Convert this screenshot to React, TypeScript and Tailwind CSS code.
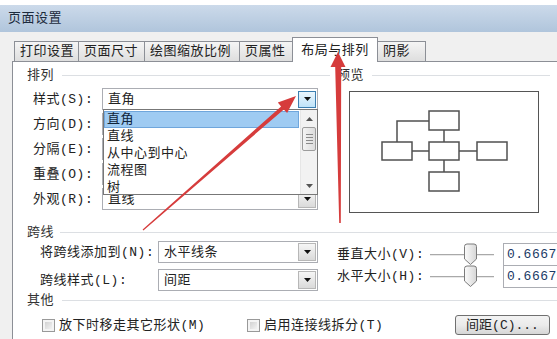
import { JSX } from "react";

// Win7-style "页面设置" dialog, 布局与排列 tab, with two red callout arrows

function DownTri({ color = "#111" }: { color?: string }) {
  return (
    <svg width="7" height="4" viewBox="0 0 7 4">
      <path d="M0 0H7L3.5 4Z" fill={color} />
    </svg>
  );
}

function UpTri({ color = "#555" }: { color?: string }) {
  return (
    <svg width="7" height="4" viewBox="0 0 7 4">
      <path d="M0 4H7L3.5 0Z" fill={color} />
    </svg>
  );
}

function Tab({ label, w, active }: { label: string; w: string; active?: boolean }) {
  if (active) {
    return (
      <div
        className={`relative z-10 -mb-px -ml-px h-[25px] ${w} shrink-0 border border-b-0 border-[#8c8f96] bg-white flex items-center justify-center`}
      >
        {label}
      </div>
    );
  }
  return (
    <div
      className={`-ml-px first:ml-0 h-[20px] ${w} shrink-0 border border-b-0 border-[#8c8f96] bg-gradient-to-b from-[#f5f5f5] to-[#dedede] flex items-center pl-[5px]`}
    >
      {label}
    </div>
  );
}

function SectionHeader({ label, lineClass }: { label: string; lineClass: string }) {
  return (
    <div className="h-[16px] flex items-center text-[#333]">
      <span className="shrink-0">{label}</span>
      <div className={`flex-1 h-px bg-[#dcdfe3] ${lineClass}`} />
    </div>
  );
}

function DropButton({ hot }: { hot?: boolean }) {
  return (
    <div
      className={
        hot
          ? "mr-[1px] h-[17px] w-[18px] shrink-0 border border-[#3c7fb1] bg-gradient-to-b from-[#eaf6fd] to-[#bfe3f9] flex items-center justify-center"
          : "mr-[1px] h-[18px] w-[18px] shrink-0 border border-[#b7b7b7] bg-gradient-to-b from-[#f6f6f6] to-[#dadada] flex items-center justify-center"
      }
    >
      <DownTri />
    </div>
  );
}

function Combo({
  value,
  w,
  hot,
  children,
}: {
  value?: string;
  w: string;
  hot?: boolean;
  children?: JSX.Element;
}) {
  return (
    <div className={`relative h-[22px] ${w} shrink-0 border border-[#abadb3] bg-white flex items-center`}>
      <span className="flex-1 pl-[5px]">{value}</span>
      <DropButton hot={hot} />
      {children}
    </div>
  );
}

function DropList() {
  const items = ["直线", "从中心到中心", "流程图", "树"];
  return (
    <div className="absolute left-0 top-[20px] z-20 w-[215px] h-[86px] border border-[#777] bg-white flex overflow-hidden">
      <div className="flex-1 flex flex-col">
        <div className="mt-[1px] mr-[1px] h-[17px] shrink-0 border border-[#6fa6dc] bg-[#9fcbf2] flex items-center pl-[2px] text-[#10243a]">
          直角
        </div>
        {items.map((t) => (
          <div key={t} className="h-[17px] shrink-0 flex items-center pl-[3px]">
            {t}
          </div>
        ))}
      </div>
      <div className="w-[17px] shrink-0 bg-[#f2f2f2] border-l border-[#e6e6e6] flex flex-col">
        <div className="h-[17px] flex items-center justify-center">
          <UpTri />
        </div>
        <div className="h-[24px] mx-[1px] border border-[#9c9c9c] rounded-[2px] bg-gradient-to-r from-[#f4f4f4] to-[#dcdcdc] flex flex-col items-center justify-center gap-[2px]">
          <div className="w-[7px] h-px bg-[#8a8a8a]" />
          <div className="w-[7px] h-px bg-[#8a8a8a]" />
          <div className="w-[7px] h-px bg-[#8a8a8a]" />
          <div className="w-[7px] h-px bg-[#8a8a8a]" />
        </div>
        <div className="flex-1" />
        <div className="h-[17px] flex items-center justify-center">
          <DownTri color="#555" />
        </div>
      </div>
    </div>
  );
}

function Diagram() {
  return (
    <svg width="188" height="120" viewBox="0 0 188 120">
      <path
        d="M47 50V29H79M94 38V50M62 59H79M109 59H127M94 68V80"
        fill="none"
        stroke="#505050"
        strokeWidth="1.5"
      />
      <g fill="white" stroke="#505050" strokeWidth="1.5">
        <rect x="79" y="19" width="30" height="19" />
        <rect x="32" y="50" width="30" height="18" />
        <rect x="79" y="50" width="30" height="18" />
        <rect x="127" y="50" width="30" height="18" />
        <rect x="79" y="80" width="30" height="19" />
      </g>
    </svg>
  );
}

function Slider() {
  return (
    <div className="relative w-[64px] h-[23px] shrink-0 flex items-center">
      <div className="w-full h-[2px] border-t border-[#a9a9a9] bg-[#e9e9e9]" />
      <svg className="absolute left-[33px] top-0" width="15" height="23" viewBox="0 0 15 23">
        <defs>
          <linearGradient id="thumb" x1="0" y1="0" x2="1" y2="0">
            <stop offset="0" stopColor="#fbfbfb" />
            <stop offset="1" stopColor="#d6d6d6" />
          </linearGradient>
        </defs>
        <path
          d="M1.5 3.5Q1.5 1 4 1H11Q13.5 1 13.5 3.5V16L7.5 21.5L1.5 16Z"
          fill="url(#thumb)"
          stroke="#7b7b7b"
        />
      </svg>
    </div>
  );
}

function SizeRow({ label, extra }: { label: string; extra?: string }) {
  return (
    <div className={`h-[23px] flex items-center ${extra ?? ""}`}>
      <span className="w-[93px] shrink-0">{label}</span>
      <Slider />
      <div className="ml-[9px] w-[80px] h-[23px] shrink-0 border border-[#abadb3] bg-white flex items-center pl-[3px] text-[#1a3a66]">
        0.6667
      </div>
    </div>
  );
}

function Check({ label, w }: { label: string; w: string }) {
  return (
    <div className={`${w} shrink-0 flex items-center`}>
      <div className="w-[13px] h-[13px] shrink-0 border border-[#999] bg-[#f4f4f4] p-[2px]">
        <div className="w-full h-full bg-gradient-to-br from-[#d2d2d2] to-[#f2f2f2]" />
      </div>
      <span className="ml-[4px]">{label}</span>
    </div>
  );
}

function Arrows() {
  return (
    <svg className="absolute inset-0 z-30 pointer-events-none" width="557" height="339" viewBox="0 0 557 339">
      <polygon
        points="142.6,229.5 281.1,106.4 277.8,102.6 296,96 287.1,113.1 283.8,109.4 143.4,230.5"
        fill="#d63c3c"
      />
      <polygon
        points="339.2,223 335.2,67 330.5,67 338,52 345.5,67 341.2,67 340.8,223"
        fill="#d63c3c"
      />
    </svg>
  );
}

export default function App() {
  return (
    <div className="relative w-[557px] h-[339px] overflow-hidden bg-white text-[13px] leading-none tracking-[0.5px] text-[#222] font-['Liberation_Mono','Noto_Sans_CJK_SC',monospace]">
      <div className="h-[5px] bg-white" />
      <div className="h-[27px] bg-gradient-to-b from-[#ccdaea] to-[#b0c5dc] flex items-center pl-[8px] text-[#1b2a3c]">
        页面设置
      </div>
      <div className="h-[307px] bg-[#f0f0f0] flex flex-col">
        <div className="h-[25px] mt-[4px] ml-[14px] flex items-end">
          <Tab label="打印设置" w="w-[65px]" />
          <Tab label="页面尺寸" w="w-[67px]" />
          <Tab label="绘图缩放比例" w="w-[96px]" />
          <Tab label="页属性" w="w-[54px]" />
          <Tab label="布局与排列" w="w-[86px]" active />
          <Tab label="阴影" w="w-[49px]" />
        </div>
        <div className="flex-1 ml-[12px] border-l border-t border-[#8c8f96] bg-white flex flex-col">
          <div className="flex">
            <div className="w-[317px] shrink-0 pl-[14px]">
              <div className="mt-[5px]">
                <SectionHeader label="排列" lineClass="ml-[8px]" />
              </div>
              <div className="mt-[5px] pl-[6px] flex flex-col gap-[3px]">
                <div className="h-[22px] flex items-center">
                  <span className="w-[69px] shrink-0">样式(S):</span>
                  <Combo value="直角" w="w-[216px]" hot>
                    <DropList />
                  </Combo>
                </div>
                <div className="h-[22px] flex items-center">
                  <span className="w-[69px] shrink-0">方向(D):</span>
                  <Combo w="w-[216px]" />
                </div>
                <div className="h-[22px] flex items-center">
                  <span className="w-[69px] shrink-0">分隔(E):</span>
                  <Combo w="w-[216px]" />
                </div>
                <div className="h-[22px] flex items-center">
                  <span className="w-[69px] shrink-0">重叠(O):</span>
                  <Combo w="w-[216px]" />
                </div>
                <div className="h-[22px] flex items-center">
                  <span className="w-[69px] shrink-0">外观(R):</span>
                  <Combo value="直线" w="w-[216px]" />
                </div>
              </div>
            </div>
            <div className="ml-[7px] flex-1">
              <div className="mt-[5px]">
                <SectionHeader label="预览" lineClass="ml-[8px] mr-[7px]" />
              </div>
              <div className="mt-[8px] ml-[12px] w-[190px] h-[122px] border border-[#555] bg-white">
                <Diagram />
              </div>
            </div>
          </div>

          <div className="mt-[11px] pl-[14px]">
            <SectionHeader label="跨线" lineClass="ml-[6px]" />
          </div>
          <div className="mt-[1px] pl-[27px] flex">
            <div className="flex flex-col gap-[6px]">
              <div className="h-[22px] flex items-center">
                <span className="w-[118px] shrink-0">将跨线添加到(N):</span>
                <Combo value="水平线条" w="w-[160px]" />
              </div>
              <div className="h-[22px] flex items-center">
                <span className="w-[118px] shrink-0">跨线样式(L):</span>
                <Combo value="间距" w="w-[160px]" />
              </div>
            </div>
            <div className="ml-[19px] mt-[2px] flex flex-col">
              <SizeRow label="垂直大小(V):" />
              <SizeRow label="水平大小(H):" extra="-mt-px" />
            </div>
          </div>

          <div className="mt-[1px] pl-[14px]">
            <SectionHeader label="其他" lineClass="ml-[8px]" />
          </div>
          <div className="mt-[7px] pl-[29px] h-[20px] flex items-center">
            <Check label="放下时移走其它形状(M)" w="w-[205px]" />
            <Check label="启用连接线拆分(T)" w="w-[208px]" />
            <div className="w-[95px] h-[20px] shrink-0 border border-[#707070] rounded-[3px] bg-gradient-to-b from-[#f3f3f3] via-[#ebebeb] to-[#d6d6d6] flex items-center justify-center tracking-normal">
              间距(C)...
            </div>
          </div>
        </div>
      </div>
      <Arrows />
    </div>
  );
}
